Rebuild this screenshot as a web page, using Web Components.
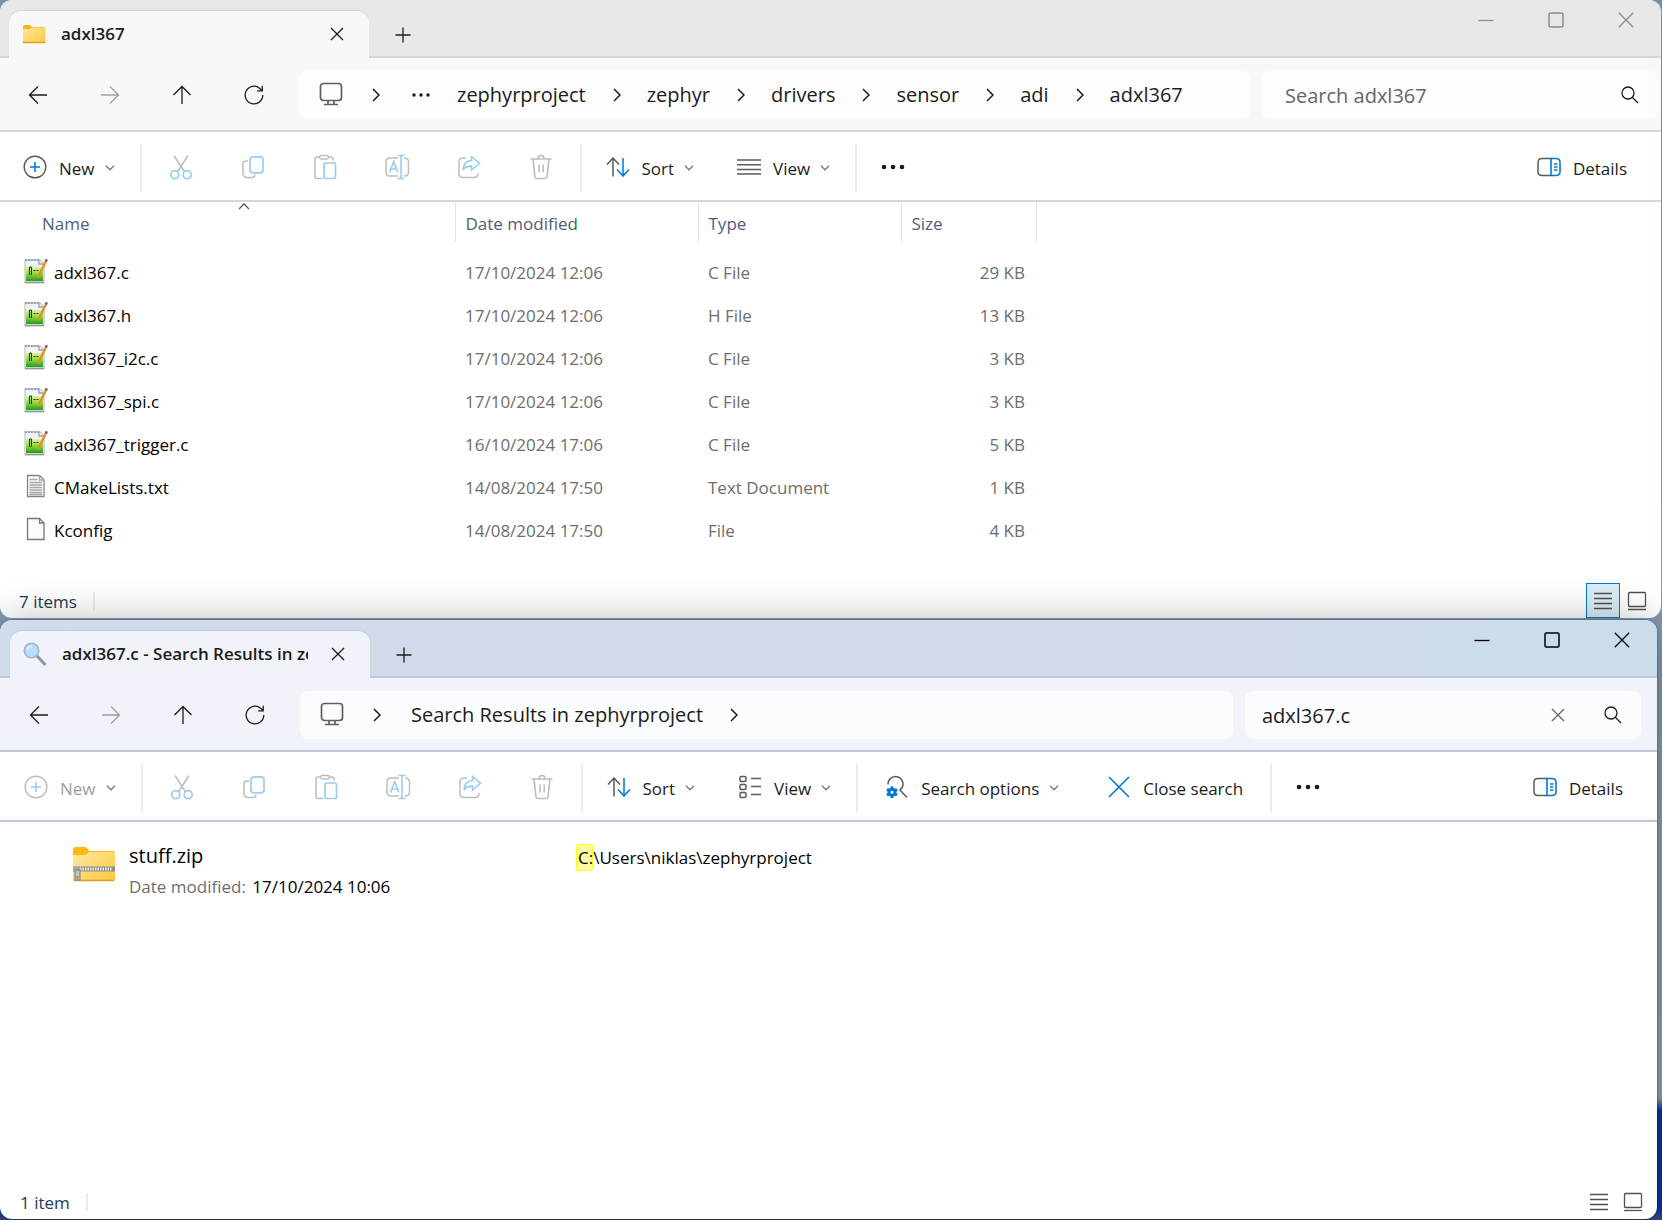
<!DOCTYPE html>
<html lang="en">
<head>
<meta charset="utf-8">
<title>adxl367</title>
<style>
    html, body {
        height: 100%;
    }

    body {
        margin: 0;
        display: flex;
        flex-direction: column;
        font-family: "Open Sans", "Noto Sans", sans-serif;
        font-size: 17px;
        color: #1b1b1b;
        background: linear-gradient(#7890a4, #8aa3b8 90%, #06389a 91%, #06389a 99%, #3b477c);
    }

    explorer-window {
        --titlebar: #e8e8e8;
        --surface: #f8f8f8;
        --field: #fdfdfd;
        --edge: #d6d6d6;
        --controls: #8c8c8c;
        margin: 0 1px 2px 0;
    }

    explorer-window[active] {
        --titlebar: linear-gradient(90deg, #cedcea, #d2daea 25%, #d2daea 75%, #cbdcea 90%);
        --surface: #f0f3f9;
        --field: #fbfcfe;
        --edge: #bfc8da;
        --controls: #000;
        --nav-end: 16px;
        flex: 1;
        margin: 0 5px 1px 0;
        padding-left: 1px;
    }
</style>
</head>
<body>

<explorer-window icon="folder" heading="adxl367">
    <crumb-trail slot="nav" path="…/zephyrproject/zephyr/drivers/sensor/adi/adxl367"></crumb-trail>
    <search-box slot="nav" placeholder="Search adxl367"></search-box>

    <tool-button slot="tools" icon="add" label="New" menu></tool-button>
    <tool-divider slot="tools"></tool-divider>
    <tool-button slot="tools" icon="cut" hint="Cut" disabled></tool-button>
    <tool-button slot="tools" icon="copy" hint="Copy" disabled></tool-button>
    <tool-button slot="tools" icon="paste" hint="Paste" disabled></tool-button>
    <tool-button slot="tools" icon="rename" hint="Rename" disabled></tool-button>
    <tool-button slot="tools" icon="share" hint="Share" disabled></tool-button>
    <tool-button slot="tools" icon="trash" hint="Delete" disabled></tool-button>
    <tool-divider slot="tools"></tool-divider>
    <tool-button slot="tools" icon="sort" label="Sort" menu></tool-button>
    <tool-button slot="tools" icon="lines" label="View" menu></tool-button>
    <tool-divider slot="tools"></tool-divider>
    <tool-button slot="tools" icon="more" hint="See more"></tool-button>
    <tool-button slot="tools" icon="details" label="Details" end></tool-button>

    <file-list></file-list>
    <status-bar slot="status" text="7 items" selected></status-bar>
</explorer-window>

<explorer-window active icon="lens" heading="adxl367.c - Search Results in zephyrproject">
    <crumb-trail slot="nav" path="Search Results in zephyrproject/"></crumb-trail>
    <search-box slot="nav" value="adxl367.c"></search-box>

    <tool-button slot="tools" icon="add" label="New" menu disabled></tool-button>
    <tool-divider slot="tools"></tool-divider>
    <tool-button slot="tools" icon="cut" hint="Cut" disabled></tool-button>
    <tool-button slot="tools" icon="copy" hint="Copy" disabled></tool-button>
    <tool-button slot="tools" icon="paste" hint="Paste" disabled></tool-button>
    <tool-button slot="tools" icon="rename" hint="Rename" disabled></tool-button>
    <tool-button slot="tools" icon="share" hint="Share" disabled></tool-button>
    <tool-button slot="tools" icon="trash" hint="Delete" disabled></tool-button>
    <tool-divider slot="tools"></tool-divider>
    <tool-button slot="tools" icon="sort" label="Sort" menu></tool-button>
    <tool-button slot="tools" icon="tiles" label="View" menu></tool-button>
    <tool-divider slot="tools"></tool-divider>
    <tool-button slot="tools" icon="options" label="Search options" menu wide></tool-button>
    <tool-button slot="tools" icon="cancel" label="Close search" wide></tool-button>
    <tool-divider slot="tools"></tool-divider>
    <tool-button slot="tools" icon="more" hint="See more"></tool-button>
    <tool-button slot="tools" icon="details" label="Details" end></tool-button>

    <search-result name="stuff.zip" modified="17/10/2024 10:06"><mark>C:</mark>\Users\niklas\zephyrproject</search-result>
    <status-bar slot="status" text="1 item"></status-bar>
</explorer-window>

<script>
// [width, height, markup], drawn 1:1
const ICONS = {
    folder: [24, 20, `<path d="M1 3q0-2 2-2h5l2 2h13v16H1z" fill="#f8b51c"/><path d="M1 5h7l2-1.500h13.500V19H1z" fill="url(#f)"/><path d="M1 18.500h22.500" stroke="#e0a020"/>
        <defs><linearGradient id="f" x2="1" y2="1"><stop stop-color="#ffe69a"/><stop offset="1" stop-color="#fdc840"/></linearGradient></defs>`],
    lens: [24, 26, `<path d="M13.500 14.500l9 9.500" stroke="#8b95a0" stroke-width="3"/><circle cx="8.500" cy="9.500" r="7.200" fill="#b5deff" stroke="#a5b4c2" stroke-width="1.600"/><path d="M4.500 9a4.500 4.500 0 0 1 4-4" stroke="#e2f3ff" stroke-width="1.500"/>`],
    close: [14, 14, `<path d="M1 1l12 12M13 1L1 13"/>`],
    plus: [16, 16, `<path d="M8 .5v15M.5 8h15"/>`],
    min: [16, 16, `<path d="M.5 8.500h15"/>`],
    max: [16, 16, `<rect x="1" y="1" width="14" height="14" rx="1.500" stroke-width="1.500"/>`],
    exit: [16, 16, `<path d="M.8.8l14.400 14.400M15.200.8L.8 15.200"/>`],
    back: [20, 20, `<path d="M10 1.500L1.500 10l8.500 8.500M1.500 10h17.500"/>`],
    forward: [20, 20, `<path d="M10 1.500l8.500 8.500-8.500 8.500M18.500 10H1"/>`],
    up: [20, 20, `<path d="M1.500 10L10 1.500l8.500 8.500M10 1.500v17.500"/>`],
    refresh: [20, 20, `<path d="M18.800 10a8.800 8.800 0 1 1-3-6.600L18 5.500M18.200.8v5h-5"/>`],
    pc: [24, 24, `<g stroke="#5f5f5f" stroke-width="1.700"><rect x="1.500" y="1.500" width="21" height="17" rx="3"/><path d="M9 18.500v3.500M15 18.500v3.500M5 22.500h14"/></g>`],
    chevron: [8, 14, `<path d="M1 1l6 6-6 6" stroke-width="1.500"/>`],
    dots: [18, 4, `<g fill="#1b1b1b"><circle cx="2" cy="2" r="1.700"/><circle cx="9" cy="2" r="1.700"/><circle cx="16" cy="2" r="1.700"/></g>`],
    search: [18, 18, `<circle cx="7" cy="7" r="6"/><path d="M11.500 11.500l5.500 5.500"/>`],
    drop: [10, 6, `<path d="M1 .8l4 4 4-4"/>`],
    caret: [12, 7, `<path d="M1 6l5-5 5 5"/>`],
    add: [24, 24, `<circle cx="12" cy="12" r="10.800" stroke="var(--line)" stroke-width="1.400"/><path d="M12 7v10M7 12h10" stroke="var(--accent)" stroke-width="1.600"/>`],
    cut: [24, 26, `<path d="M5 1.500l10.300 16M19 1.500L8.700 17.500" stroke="var(--line)" stroke-width="1.500"/><g stroke="var(--accent)" stroke-width="1.700"><circle cx="5.800" cy="20.700" r="4"/><circle cx="18.200" cy="20.700" r="4"/></g>`],
    copy: [24, 24, `<path d="M7 6H5Q2 6 2 9v9q0 4.500 4.500 4.500H11q3 0 3-3" stroke="var(--line)" stroke-width="1.500"/><rect x="9" y="1.800" width="13" height="16" rx="3" stroke="var(--accent)" stroke-width="1.700"/>`],
    paste: [24, 26, `<g stroke="var(--line)" stroke-width="1.500"><path d="M7 3H4Q2 3 2 5v17.500Q2 24.500 4 24.500h5.500M15 3h3q2 0 2 2v1.500"/><rect x="6.500" y="1.500" width="9" height="3.500" rx="1.700"/></g><rect x="11" y="9" width="11.500" height="15.500" rx="1.500" stroke="var(--accent)" stroke-width="1.700"/>`],
    rename: [26, 26, `<path d="M14 4H6Q2 4 2 8v10q0 4 4 4h8M20 4q4.500 0 4.500 4v10q0 4-4.500 4" stroke="var(--line)" stroke-width="1.500"/><g stroke="var(--accent)" stroke-width="1.600"><path d="M17 1.500v23M13.500 1.500h7M13.500 24.500h7M5.500 18.500l4.200-11 4.200 11M7 15h5.500"/></g>`],
    share: [24, 24, `<path d="M9 3H6Q2 3 2 7v11.500q0 4 4 4h11q4 0 4-4V18" stroke="var(--line)" stroke-width="1.500"/><path d="M14.500 1.500l8 6.800-8 6.800v-4q-6.500 0-8.500 4Q6.500 6 14.500 5.500z" stroke="var(--accent)" stroke-width="1.600"/>`],
    trash: [24, 26, `<g stroke="var(--line)" stroke-width="1.600"><path d="M1.500 5h21M4 5l2 18q.2 1.500 2 1.500h8q1.800 0 2-1.500L20 5M9 5q0-3.500 3-3.500T15 5"/><path d="M10 10.500v8M14.200 10.500v8"/></g>`],
    sort: [24, 20, `<path d="M1 7.500L7 1l6 6.500M7 1v18.500" stroke="var(--line)" stroke-width="1.500"/><path d="M11 12.500l6 6.500 6-6.500M17 19V1" stroke="var(--accent)" stroke-width="1.500"/>`],
    lines: [24, 18, `<path d="M0 2h24M0 6.700h24M0 11.400h24M0 16.100h24" stroke="var(--line)" stroke-width="1.500"/>`],
    tiles: [24, 24, `<g stroke="var(--line)" stroke-width="1.500"><rect x="2" y="1.500" width="6" height="5" rx="1.500"/><rect x="2" y="9.500" width="6" height="5" rx="1.500"/><rect x="2" y="17.500" width="6" height="5" rx="1.500"/><path d="M13 3.500h10M13 11.500h10M13 19.500h10"/></g>`],
    more: [24, 6, `<g fill="#1b1b1b"><circle cx="3" cy="3" r="2.300"/><circle cx="12" cy="3" r="2.300"/><circle cx="21" cy="3" r="2.300"/></g>`],
    options: [24, 24, `<path d="M3 9.500a7.500 7.500 0 1 1 12 5.500l7 7.500" stroke="var(--line)" stroke-width="1.500"/><g stroke="var(--accent)" stroke-width="3"><path d="M7 11.500v11.500M2 14.400l10 5.700M12 14.400L2 20.100"/><circle cx="7" cy="17.200" r="3" stroke="var(--accent)" fill="#fff"/></g>`],
    cancel: [24, 24, `<path d="M2 2l20 20M22 2L2 22" stroke="var(--accent)" stroke-width="1.600"/>`],
    details: [24, 20, `<path d="M14 1.500H5Q1 1.500 1 5.500v9q0 4 4 4h9" stroke="var(--line)" stroke-width="1.500"/><path d="M14 1.500h5q4 0 4 4v9q0 4-4 4h-5zM17 7h3.500M17 10h3.500M17 13h3.500" stroke="var(--accent)" stroke-width="1.600"/>`],
    listview: [20, 18, `<path d="M1 1.500h18M1 6.500h18M1 11.500h18M1 16.500h18" stroke="#505050"/>`],
    thumbview: [20, 20, `<rect x="1.500" y="1.500" width="17" height="14" rx="1" stroke="#505050"/><path d="M1 18.500h18" stroke="#505050"/>`],
    code: [24, 26, `<path d="M1 2h15l4 4v18.500H1z" fill="#eef3f7" stroke="#c2c8cc"/><path d="M1 2h14" stroke="#8d9296" stroke-dasharray="2 1"/><path d="M2 9h17v14H2z" fill="url(#g)"/><path d="M1 24.500h19" stroke="#8f9a8f" stroke-width="1.500"/>
        <path d="M15 2v4h4" stroke="#9aa0a5" fill="#fff"/><path d="M5.500 9v8M7.500 9v8M5.500 9h2M9.500 12.500h2M12.500 12.500h2" stroke="#333" stroke-width="1.100"/><path d="M21.500 4L14 19.500" stroke="#e0941e" stroke-width="2.400"/><path d="M22.800 1.200l-1.200 2.700" stroke="#a0526a" stroke-width="2.600"/>
        <defs><linearGradient id="g" x2="0" y2="1"><stop stop-color="#e2f5a0"/><stop offset=".5" stop-color="#8fd63a"/><stop offset="1" stop-color="#209a20"/></linearGradient></defs>`],
    text: [24, 26, `<path d="M3.500 2.500h12l4.500 4.500v16.500h-16.500z" fill="#fafafa" stroke="#858585"/><path d="M15.500 2.500v4.500h4.500M5.500 6.500h8M5.500 9.500h12.500M5.500 12h12.500M5.500 14.500h12.500M5.500 17h12.500M5.500 19.500h12.500M5.500 21.500h12.500" stroke="#a8a8a8"/>`],
    blank: [24, 26, `<path d="M3.500 2.500h12l4.500 4.500v16.500h-16.500z" fill="#fafafa" stroke="#777"/><path d="M15.500 2.500v4.500h4.500" stroke="#777"/>`],
    zip: [44, 36, `<path d="M1 4q0-3 3-3h9q2 0 4 4h24q2 0 2 2v26q0 2-2 2H3q-2 0-2-2z" fill="#fbb917"/><path d="M1 9h12q2 0 3.500-3H41q2 0 2 2v25q0 2-2 2H3q-2 0-2-2z" fill="url(#z)"/><path d="M2 34.500h40" stroke="#e0a020"/>
        <path d="M1 23h42" stroke="#8c8c8c" stroke-width="5"/><path d="M8 23h32" stroke="#e8e8e8" stroke-width="3" stroke-dasharray="1.500 1"/><path d="M1 20.500h7v5H1z" fill="#a9a9a9"/><path d="M3 24h5v10H3z" fill="#c4c4c4" stroke="#8e8e8e"/><path d="M4.500 30h2v2.500h-2z" fill="#c48a10"/>
        <defs><linearGradient id="z" x2="1" y2="1"><stop stop-color="#ffe9a4"/><stop offset="1" stop-color="#fdc838"/></linearGradient></defs>`],
};

function svg(name) {
    const [w, h, body] = ICONS[name];
    return `<svg width="${w}" height="${h}" viewBox="0 0 ${w} ${h}" fill="none" stroke="currentColor" stroke-width="1.300" aria-hidden="true">${body}</svg>`;
}

const RESET = `
    * {
        box-sizing: border-box;
    }

    svg {
        display: block;
        flex: none;
    }

    [fill]:not([stroke]) {
        stroke: none;
    }

    button {
        display: flex;
        align-items: center;
        justify-content: center;
        padding: 0;
        border: 0;
        background: none;
        color: inherit;
        font: inherit;
    }
`;

class ExplorerWindow extends HTMLElement {

    constructor() {
        super();
        this.attachShadow({ mode: 'open' });
    }

    connectedCallback() {
        this.shadowRoot.innerHTML = `
        <style>
            ${RESET}

            :host {
                display: flex;
                flex-direction: column;
                position: relative;
                box-sizing: border-box;
                border-radius: 12px;
                overflow: hidden;
                background: #fff;
            }

            :host([active]) {
                overflow: visible;
                background: linear-gradient(#d0dbea 40px, #fff 80px);
                box-shadow: 0 4px 44px rgba(0,0,0,0.32), 0 0 2px rgba(0,0,0,0.5);
            }

            header {
                display: flex;
                align-items: flex-end;
                height: 58px;
                padding-left: 9px;
                background: var(--titlebar);
                box-shadow: inset 0 -2px var(--edge);
            }

            :host([active]) header {
                margin-left: -1px;
                padding-left: 10px;
                border-radius: 12px 12px 0 0;
            }

            .tab {
                display: flex;
                align-items: center;
                width: 360px;
                height: 47px;
                padding: 0 25px 2px 13px;
                border-radius: 12px 12px 0 0;
                background: var(--surface);
                box-shadow: 0 -1px 1px rgba(0,0,0,0.08);
            }

            .title {
                width: 246px;
                margin-left: 15px;
                margin-right: auto;
                overflow: hidden;
                white-space: nowrap;
                font-weight: 600;
                line-height: 24px;
            }

            .new {
                width: 68px;
                height: 46px;
            }

            .controls {
                display: flex;
                align-self: flex-start;
                margin-left: auto;
                color: var(--controls);
            }

            .controls button {
                width: 70px;
                height: 40px;
            }

            nav {
                display: flex;
                align-items: center;
                height: 74px;
                padding: 2px var(--nav-end, 3px) 0 2px;
                background: var(--surface);
                border-bottom: 2px solid var(--edge);
            }

            nav > button {
                width: 72px;
                height: 48px;
            }

            nav > button[disabled] {
                color: #a0a0a0;
            }

            slot[name=nav] {
                display: flex;
                flex: 1;
                gap: 12px;
                margin-left: 9px;
            }

            .tools {
                display: flex;
                align-items: center;
                height: 70px;
                padding: 4px 12px 0 2px;
                background: #fff;
                border-bottom: 2px solid var(--edge);
            }

            :host([active]) nav, :host([active]) .tools {
                margin-left: -1px;
                padding-left: 3px;
            }

            main {
                flex: 1;
            }
        </style>
        <header>
            <div class="tab">
                ${svg(this.getAttribute('icon'))}
                <span class="title">${this.getAttribute('heading')}</span>
                <button aria-label="Close tab">${svg('close')}</button>
            </div>
            <button class="new" aria-label="New tab">${svg('plus')}</button>
            <div class="controls">
                <button aria-label="Minimize">${svg('min')}</button>
                <button aria-label="Maximize">${svg('max')}</button>
                <button aria-label="Close">${svg('exit')}</button>
            </div>
        </header>
        <nav>
            <button aria-label="Back">${svg('back')}</button>
            <button aria-label="Forward" disabled>${svg('forward')}</button>
            <button aria-label="Up">${svg('up')}</button>
            <button aria-label="Refresh">${svg('refresh')}</button>
            <slot name="nav"></slot>
        </nav>
        <div class="tools"><slot name="tools"></slot></div>
        <main><slot></slot></main>
        <slot name="status"></slot>
        `
    }
}

class CrumbTrail extends HTMLElement {

    constructor() {
        super();
        this.attachShadow({ mode: 'open' });
    }

    connectedCallback() {
        const crumbs = this.getAttribute('path').split('/').map(part => {
            if (part == '…') return `<button aria-label="More folders">${svg('dots')}</button>`
            return part ? `<a href="#">${part}</a>` : ''
        });

        this.shadowRoot.innerHTML = `
        <style>
            ${RESET}

            :host {
                display: flex;
                flex: 1;
                align-items: center;
                height: 48px;
                padding-left: 20px;
                border-radius: 8px;
                background: var(--field);
                font-size: 20px;
                line-height: 28px;
            }

            a {
                color: inherit;
                text-decoration: none;
                white-space: nowrap;
            }

            .gap {
                margin: 0 26px 0 27px;
            }

            .first {
                margin: 0 30px 0 29px;
            }

            .pc {
                margin-bottom: 2px;
            }

            button {
                margin-left: 2px;
                margin-right: 27px;
            }

            button + .gap {
                display: none;
            }
        </style>
        <span class="pc">${svg('pc')}</span>
        <span class="first">${svg('chevron')}</span>
        ${crumbs.join(`<span class="gap">${svg('chevron')}</span>`)}
        `
    }
}

class SearchBox extends HTMLElement {

    constructor() {
        super();
        this.attachShadow({ mode: 'open' });
    }

    connectedCallback() {
        const value = this.getAttribute('value') || ''

        this.shadowRoot.innerHTML = `
        <style>
            ${RESET}

            :host {
                display: flex;
                align-items: center;
                width: 396px;
                height: 48px;
                box-sizing: border-box;
                padding: 0 19px 0 23px;
                border-radius: 8px;
                background: var(--field);
            }

            :host([value]) {
                padding-left: 17px;
            }

            input {
                flex: 1;
                min-width: 0;
                padding: 0;
                border: 0;
                outline: 0;
                background: none;
                color: inherit;
                font: inherit;
                font-size: 20px;
            }

            input::placeholder {
                color: #666;
            }

            .clear {
                margin-right: 39px;
                color: #666;
            }
        </style>
        <input type="text" aria-label="Search" value="${value}" placeholder="${this.getAttribute('placeholder') || ''}">
        ${value ? `<button class="clear" aria-label="Clear">${svg('close')}</button>` : ''}
        <button aria-label="Search">${svg('search')}</button>
        `
    }
}

class ToolButton extends HTMLElement {

    constructor() {
        super();
        this.attachShadow({ mode: 'open' });
    }

    connectedCallback() {
        const label = this.getAttribute('label')
        const icon = this.getAttribute('icon')

        this.shadowRoot.innerHTML = `
        <style>
            ${RESET}

            :host {
                display: block;
                --line: #5a5a5a;
                --accent: #0078d4;
            }

            :host([disabled]) {
                --line: #bdbdbd;
                --accent: #99ccf3;
                color: #9d9d9d;
            }

            :host([end]) {
                margin-left: auto;
            }

            button {
                width: 72px;
                height: 48px;
            }

            button > svg {
                margin-bottom: 2px;
            }

            .labelled {
                width: auto;
                padding: 0 22px 0 21px;
            }

            :host([wide]) .labelled {
                padding: 0 24px;
            }

            .more {
                width: 66px;
            }

            .label {
                margin-left: 12px;
                white-space: nowrap;
            }

            .arrow {
                margin-left: 10px;
                color: #777;
            }
        </style>
        <button class="${label ? 'labelled' : icon}" aria-label="${label || this.getAttribute('hint')}" ${this.hasAttribute('disabled') ? 'disabled' : ''}>
            ${svg(icon)}
            ${label ? `<span class="label">${label}</span>` : ''}
            ${this.hasAttribute('menu') ? `<span class="arrow">${svg('drop')}</span>` : ''}
        </button>
        `
    }
}

class ToolDivider extends HTMLElement {

    constructor() {
        super();
        this.attachShadow({ mode: 'open' });
        this.shadowRoot.innerHTML = `
        <style>
            :host {
                display: block;
                width: 2px;
                height: 48px;
                margin: 0 3px;
                background: #ededed;
            }
        </style>
        `
    }
}

class FileList extends HTMLElement {

    get files() {
        return [
            ['code', 'adxl367.c', '17/10/2024 12:06', 'C File', '29 KB'],
            ['code', 'adxl367.h', '17/10/2024 12:06', 'H File', '13 KB'],
            ['code', 'adxl367_i2c.c', '17/10/2024 12:06', 'C File', '3 KB'],
            ['code', 'adxl367_spi.c', '17/10/2024 12:06', 'C File', '3 KB'],
            ['code', 'adxl367_trigger.c', '16/10/2024 17:06', 'C File', '5 KB'],
            ['text', 'CMakeLists.txt', '14/08/2024 17:50', 'Text Document', '1 KB'],
            ['blank', 'Kconfig', '14/08/2024 17:50', 'File', '4 KB'],
        ]
    }

    constructor() {
        super();
        this.attachShadow({ mode: 'open' });
    }

    connectedCallback() {
        this.shadowRoot.innerHTML = `
        <style>
            ${RESET}

            :host {
                display: block;
                padding-bottom: 31px;
            }

            table {
                table-layout: fixed;
                width: 1036px;
                border-collapse: collapse;
                line-height: 24px;
            }

            th {
                position: relative;
                height: 41px;
                padding: 2px 0 0 10px;
                border-right: 1px solid #e2e2e2;
                color: #4c607a;
                font-weight: 400;
                text-align: left;
            }

            th:first-child {
                padding-left: 42px;
            }

            .caret {
                position: absolute;
                top: 1px;
                left: 238px;
                color: #555;
            }

            .space td {
                height: 8px;
            }

            td {
                height: 43px;
                padding: 0 11px 0 10px;
                color: #6d6d6d;
                white-space: nowrap;
            }

            td:first-child {
                padding-left: 24px;
            }

            td:last-child {
                text-align: right;
            }

            .name {
                display: flex;
                align-items: center;
                gap: 6px;
                color: #000;
            }

            .name svg {
                margin-bottom: 4px;
            }
        </style>
        <table>
            <colgroup><col width="455"><col width="243"><col width="203"><col width="135"></colgroup>
            <thead>
                <tr>
                    <th>Name<span class="caret">${svg('caret')}</span></th>
                    <th>Date modified</th>
                    <th>Type</th>
                    <th>Size</th>
                </tr>
            </thead>
            <tbody>
                <tr class="space"><td colspan="4"></td></tr>
                ${this.files.map(([icon, name, date, type, size]) => `
                <tr>
                    <td><span class="name">${svg(icon)}${name}</span></td>
                    <td>${date}</td>
                    <td>${type}</td>
                    <td>${size}</td>
                </tr>`).join('')}
            </tbody>
        </table>
        `
    }
}

class SearchResult extends HTMLElement {

    constructor() {
        super();
        this.attachShadow({ mode: 'open' });
    }

    connectedCallback() {
        this.shadowRoot.innerHTML = `
        <style>
            ${RESET}

            :host {
                display: grid;
                grid-template-columns: 44px 434px 1fr;
                column-gap: 13px;
                align-items: start;
                padding: 18px 0 0 71px;
                line-height: 30px;
                color: #000;
            }

            svg {
                margin-top: 6px;
            }

            .name {
                font-size: 20px;
                line-height: 32px;
            }

            .label {
                margin-right: 2px;
                color: #6d6d6d;
            }

            .path {
                line-height: 36px;
            }

            ::slotted(mark) {
                padding: 2px 0 2px 2px;
                border-radius: 3px;
                background: #ffffa0;
                box-shadow: inset 0 0 0 1px #ffff20;
            }
        </style>
        ${svg('zip')}
        <div>
            <div class="name">${this.getAttribute('name')}</div>
            <div><span class="label">Date modified:</span> ${this.getAttribute('modified')}</div>
        </div>
        <div class="path"><slot></slot></div>
        `
    }
}

class StatusBar extends HTMLElement {

    constructor() {
        super();
        this.attachShadow({ mode: 'open' });
    }

    connectedCallback() {
        this.shadowRoot.innerHTML = `
        <style>
            ${RESET}

            :host {
                display: flex;
                align-items: center;
                height: 35px;
                padding: 0 7px 0 19px;
                color: #24395a;
            }

            .text {
                padding-top: 2px;
            }

            .line {
                width: 2px;
                height: 18px;
                margin-left: 16px;
                margin-right: auto;
                background: #ececec;
            }

            button {
                width: 34px;
                height: 35px;
            }

            :host([selected]) .list {
                border: 1px solid #0078d4;
                background: #d9ecf5;
            }
        </style>
        <span class="text">${this.getAttribute('text')}</span>
        <span class="line"></span>
        <button class="list" aria-label="Details view">${svg('listview')}</button>
        <button aria-label="Large thumbnails">${svg('thumbview')}</button>
        `
    }
}

customElements.define('explorer-window', ExplorerWindow);
customElements.define('crumb-trail', CrumbTrail);
customElements.define('search-box', SearchBox);
customElements.define('tool-button', ToolButton);
customElements.define('tool-divider', ToolDivider);
customElements.define('file-list', FileList);
customElements.define('search-result', SearchResult);
customElements.define('status-bar', StatusBar);
</script>
</body>
</html>
